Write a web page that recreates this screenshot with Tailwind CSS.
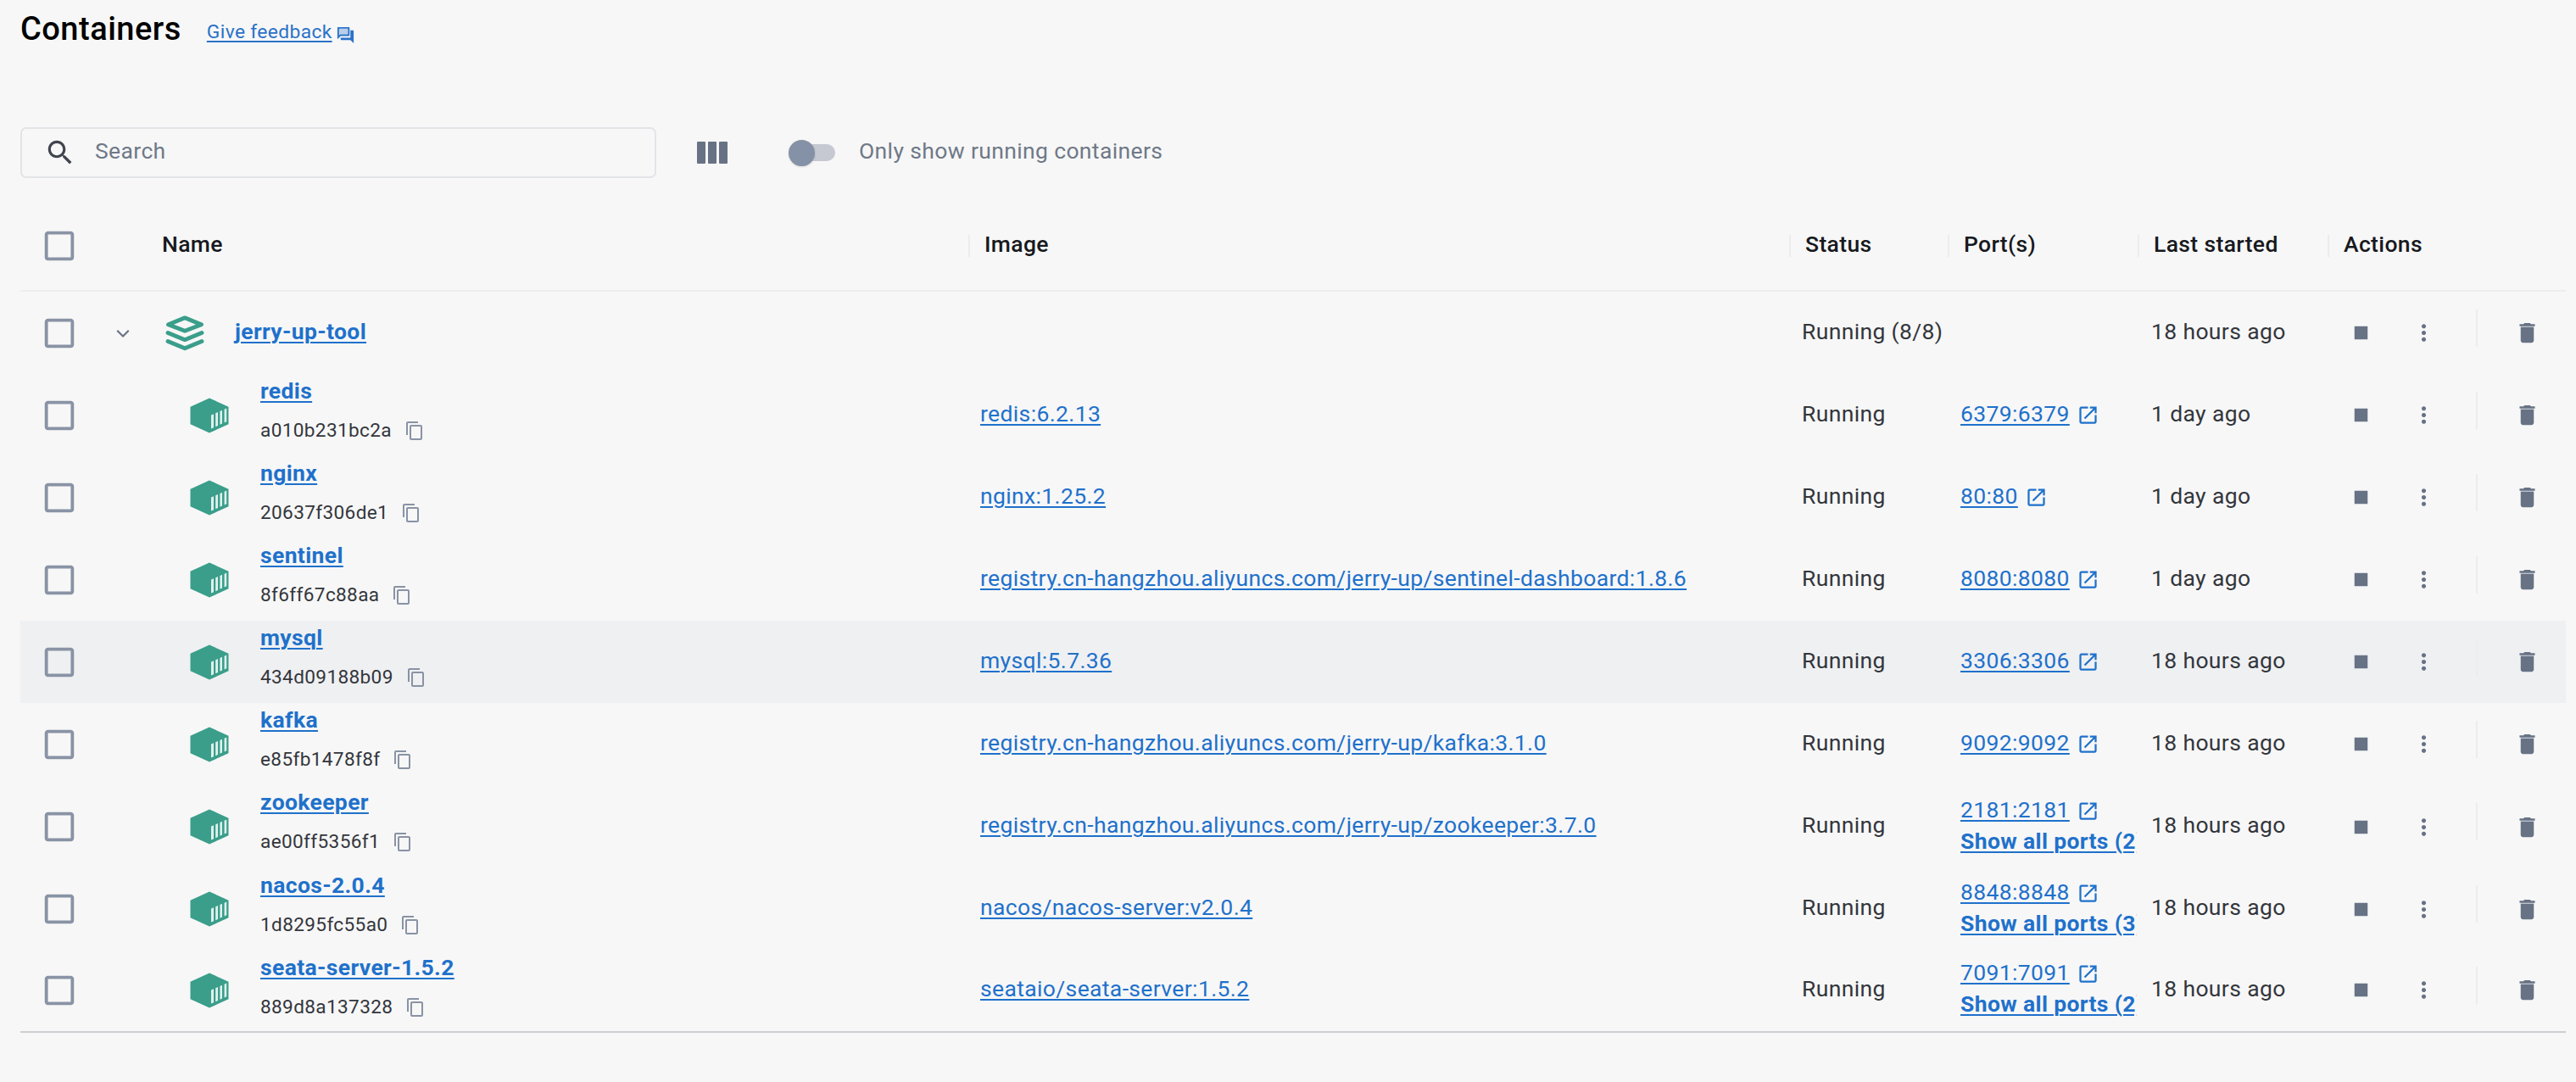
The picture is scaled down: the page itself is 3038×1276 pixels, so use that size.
<!DOCTYPE html>
<html lang="en">
<head>
    <meta charset="UTF-8">
    <meta name="viewport" content="width=device-width, initial-scale=1.0">
    <title>Containers</title>
    <script src="https://cdn.jsdelivr.net/npm/@tailwindcss/browser@4"></script>
</head>
<body class="bg-[#f7f7f7] font-['Roboto',sans-serif] text-[26.5px] tracking-[0.36px] text-[#33363c] antialiased">

    <!-- Icon sprite -->
    <svg class="hidden">
        <symbol id="i-box" viewBox="0 0 24 24"><path d="M19 5v14H5V5h14m0-2H5c-1.1 0-2 .9-2 2v14c0 1.1.9 2 2 2h14c1.1 0 2-.9 2-2V5c0-1.1-.9-2-2-2z"/></symbol>
        <symbol id="i-copy" viewBox="0 0 24 24"><path d="M16 1H4c-1.1 0-2 .9-2 2v14h2V3h12V1zm3 4H8c-1.1 0-2 .9-2 2v14c0 1.1.9 2 2 2h11c1.1 0 2-.9 2-2V7c0-1.1-.9-2-2-2zm0 16H8V7h11v14z"/></symbol>
        <symbol id="i-open" viewBox="0 0 24 24"><path d="M19 19H5V5h7V3H5c-1.11 0-2 .9-2 2v14c0 1.1.89 2 2 2h14c1.1 0 2-.9 2-2v-7h-2v7zM14 3v2h3.59l-9.83 9.83 1.41 1.41L19 6.41V10h2V3h-7z"/></symbol>
        <symbol id="i-stop" viewBox="0 0 24 24"><path d="M6 6h12v12H6z"/></symbol>
        <symbol id="i-more" viewBox="0 0 24 24"><path d="M12 8c1.1 0 2-.9 2-2s-.9-2-2-2-2 .9-2 2 .9 2 2 2zm0 2c-1.1 0-2 .9-2 2s.9 2 2 2 2-.9 2-2-.9-2-2-2zm0 6c-1.1 0-2 .9-2 2s.9 2 2 2 2-.9 2-2-.9-2-2-2z"/></symbol>
        <symbol id="i-trash" viewBox="0 0 24 24"><path d="M6 19c0 1.1.9 2 2 2h8c1.1 0 2-.9 2-2V7H6v12zM19 4h-3.500l-1-1h-5l-1 1H5v2h14V4z"/><path d="M6 6h12v1H6z" opacity=".4"/></symbol>
        <symbol id="i-cube" viewBox="0 0 46 42">
            <path d="M23 .5 45.5 10.700V31.300L23 41.500.5 31.300V10.700z" fill="#3a9e8a"/>
            <path d="M25 20.500 28 19.200V35.200L25 36.600zM30.200 18.200 33 17V32.900L30.200 34.200zM35.400 16 38 14.800V30.600L35.400 31.800zM40.600 13.700 43.200 12.500V28.300L40.600 29.500z" fill="#dff2ee"/>
        </symbol>
    </svg>

    <header class="flex h-[150px] items-start pl-6">
        <h1 class="mt-[12px] text-[38px] leading-[44px] font-medium tracking-[0.5px] text-black">Containers</h1>
        <a class="mt-[24px] ml-[30px] text-[22.800px] leading-7 text-[#2a72c8] underline decoration-2 underline-offset-[3px]">Give feedback</a>
        <svg class="mt-[30px] ml-[4px] size-[23px] fill-[#2a72c8]" viewBox="0 0 24 24"><path d="M15 4v7H5.170L4 12.170V4h11m1-2H3c-.55 0-1 .45-1 1v14l4-4h10c.55 0 1-.45 1-1V3c0-.55-.45-1-1-1z"/><path d="M20 6h-2v9H6v2c0 .55.45 1 1 1h11l4 4V7c0-.55-.45-1-1-1z"/><path d="M4 4h11v7H4z" opacity=".3"/></svg>
    </header>

    <!-- Toolbar -->
    <div class="flex h-[60px] items-center pl-6">
        <div class="flex h-[60px] w-[750px] items-center rounded-[7px] border-2 border-[#e3e4e7] pl-[26px]">
            <svg class="size-[38px] fill-[#3f444d]" viewBox="0 0 24 24"><path d="M15.500 14h-.79l-.28-.27C15.410 12.590 16 11.110 16 9.500 16 5.910 13.090 3 9.500 3S3 5.910 3 9.500 5.910 16 9.500 16c1.610 0 3.090-.59 4.230-1.570l.27.28v.79l5 4.990L20.490 19l-4.990-5zm-6 0C7.010 14 5 11.990 5 9.500S7.010 5 9.500 5 14 7.010 14 9.500 11.990 14 9.500 14z"/></svg>
            <span class="ml-[22px] pb-1 text-[#6f7987]">Search</span>
        </div>
        <div class="ml-[48px] flex gap-[3px]">
            <i class="h-[26px] w-[10px] rounded-[1px] bg-[#677285]"></i>
            <i class="h-[26px] w-[10px] rounded-[1px] bg-[#677285]"></i>
            <i class="h-[26px] w-[10px] rounded-[1px] bg-[#677285]"></i>
        </div>
        <div class="ml-[76px] flex h-5 w-[51px] items-center rounded-full bg-[#c6c8d2]">
            <i class="-ml-1 size-[31px] rounded-full bg-[#8591a6] shadow-sm"></i>
        </div>
        <span class="ml-[28px] pb-1 text-[#6f7987]">Only show running containers</span>
    </div>

    <!-- Table -->
    <main class="ml-6 w-[3002px]">
        <div class="grid h-[134px] grid-cols-[167px_951px_968px_187px_224px_224px_1fr] items-center border-b-2 border-[#ededef] pt-[27px] font-medium text-[#17191e]">
            <svg class="ml-[23px] size-[46px] fill-[#8993a5]"><use href="#i-box"/></svg>
            <span class="pb-1">Name</span>
            <span class="flex h-[26px] items-center border-l-2 border-[#ececef] pb-1 pl-[17px]">Image</span>
            <span class="flex h-[26px] items-center border-l-2 border-[#ececef] pb-1 pl-[17px]">Status</span>
            <span class="flex h-[26px] items-center border-l-2 border-[#ececef] pb-1 pl-[17px]">Port(s)</span>
            <span class="flex h-[26px] items-center border-l-2 border-[#ececef] pb-1 pl-[17px]">Last started</span>
            <span class="flex h-[26px] items-center border-l-2 border-[#ececef] pb-1 pl-[17px]">Actions</span>
        </div>
        <div id="rows" class="border-b-2 border-[#cdced2] pb-[2.500px]"></div>
    </main>

    <script>
        const containers = [
            { name: 'redis', id: 'a010b231bc2a', image: 'redis:6.2.13', port: '6379:6379', started: '1 day ago' },
            { name: 'nginx', id: '20637f306de1', image: 'nginx:1.25.2', port: '80:80', started: '1 day ago' },
            { name: 'sentinel', id: '8f6ff67c88aa', image: 'registry.cn-hangzhou.aliyuncs.com/jerry-up/sentinel-dashboard:1.8.6', port: '8080:8080', started: '1 day ago' },
            { name: 'mysql', id: '434d09188b09', image: 'mysql:5.7.36', port: '3306:3306', started: '18 hours ago', hover: true },
            { name: 'kafka', id: 'e85fb1478f8f', image: 'registry.cn-hangzhou.aliyuncs.com/jerry-up/kafka:3.1.0', port: '9092:9092', started: '18 hours ago' },
            { name: 'zookeeper', id: 'ae00ff5356f1', image: 'registry.cn-hangzhou.aliyuncs.com/jerry-up/zookeeper:3.7.0', port: '2181:2181', more: 2, started: '18 hours ago' },
            { name: 'nacos-2.0.4', id: '1d8295fc55a0', image: 'nacos/nacos-server:v2.0.4', port: '8848:8848', more: 3, started: '18 hours ago' },
            { name: 'seata-server-1.5.2', id: '889d8a137328', image: 'seataio/seata-server:1.5.2', port: '7091:7091', more: 2, started: '18 hours ago', last: true },
        ];

        const link = 'text-[#1f71cb] underline decoration-2 underline-offset-[3px]';
        const rowClass = 'grid grid-cols-[113px_88px_931px_969px_187px_225px_225px_1fr] items-center';
        const checkbox = '<svg class="ml-[23px] size-[46px] fill-[#8993a5]"><use href="#i-box"/></svg>';

        const actions = `
            <div class="flex items-center pl-[7px] fill-[#677285]">
                <svg class="size-[31px]"><use href="#i-stop"/></svg>
                <svg class="ml-[43px] size-[31px]"><use href="#i-more"/></svg>
                <i class="ml-[46px] mb-3 h-11 w-0.5 bg-[#ececef]"></i>
                <svg class="ml-[43px] size-[31px]"><use href="#i-trash"/></svg>
            </div>`;

        const group = `
            <div class="${rowClass} h-[97px]">
                ${checkbox}
                <svg class="-ml-[7px] size-[30px] fill-[#677285]" viewBox="0 0 24 24"><path d="M16.800 8.800 12 13.600 7.200 8.800 6 10l6 6 6-6z"/></svg>
                <div class="-ml-[30px] flex items-center">
                    <svg class="h-[42px] w-[46px]" viewBox="0 0 46 42" fill="none" stroke="#3a9e8a" stroke-width="4.800" stroke-linejoin="round" stroke-linecap="round">
                        <path d="M23 2.800 42.500 10.800 23 18.300 3.500 10.800z"/>
                        <path d="M3 20.500 23 28.700 43 20.500"/>
                        <path d="M3 30.500 23 38.800 43 30.500"/>
                    </svg>
                    <a class="${link} ml-[36px] pb-1 font-bold">jerry-up-tool</a>
                </div>
                <span></span>
                <span class="pb-1 whitespace-nowrap">Running (8/8)</span>
                <span></span>
                <span class="pb-1">18 hours ago</span>
                ${actions}
            </div>`;

        const row = (c) => `
            <div class="${rowClass} ${c.last ? 'h-[93px]' : 'h-[97.100px]'} ${c.hover ? 'bg-[#eff0f2]' : ''}">
                ${checkbox}
                <svg class="ml-[87px] h-[42px] w-[46px]"><use href="#i-cube"/></svg>
                <div class="flex h-full flex-col pl-[82px]">
                    <div class="leading-[40px] font-bold"><a class="${link}">${c.name}</a></div>
                    <div class="flex items-center text-[22.600px] leading-[54px]">
                        <span>${c.id}</span>
                        <svg class="ml-[15px] size-6 fill-[#8993a5]"><use href="#i-copy"/></svg>
                    </div>
                </div>
                <div class="pb-[4px]"><a class="${link}">${c.image}</a></div>
                <span class="pb-[4px]">Running</span>
                <div class="w-[208px] overflow-hidden pb-[5px] leading-[37px] whitespace-nowrap">
                    <div class="flex items-center"><a class="${link}">${c.port}</a><svg class="mt-1 ml-2 size-[27px] fill-[#1f71cb]"><use href="#i-open"/></svg></div>
                    ${c.more ? `<a class="${link} block font-bold">Show all ports (${c.more})</a>` : ''}
                </div>
                <span class="pb-[4px]">${c.started}</span>
                ${actions}
            </div>`;

        document.getElementById('rows').innerHTML = group + containers.map(row).join('');
    </script>
</body>
</html>
